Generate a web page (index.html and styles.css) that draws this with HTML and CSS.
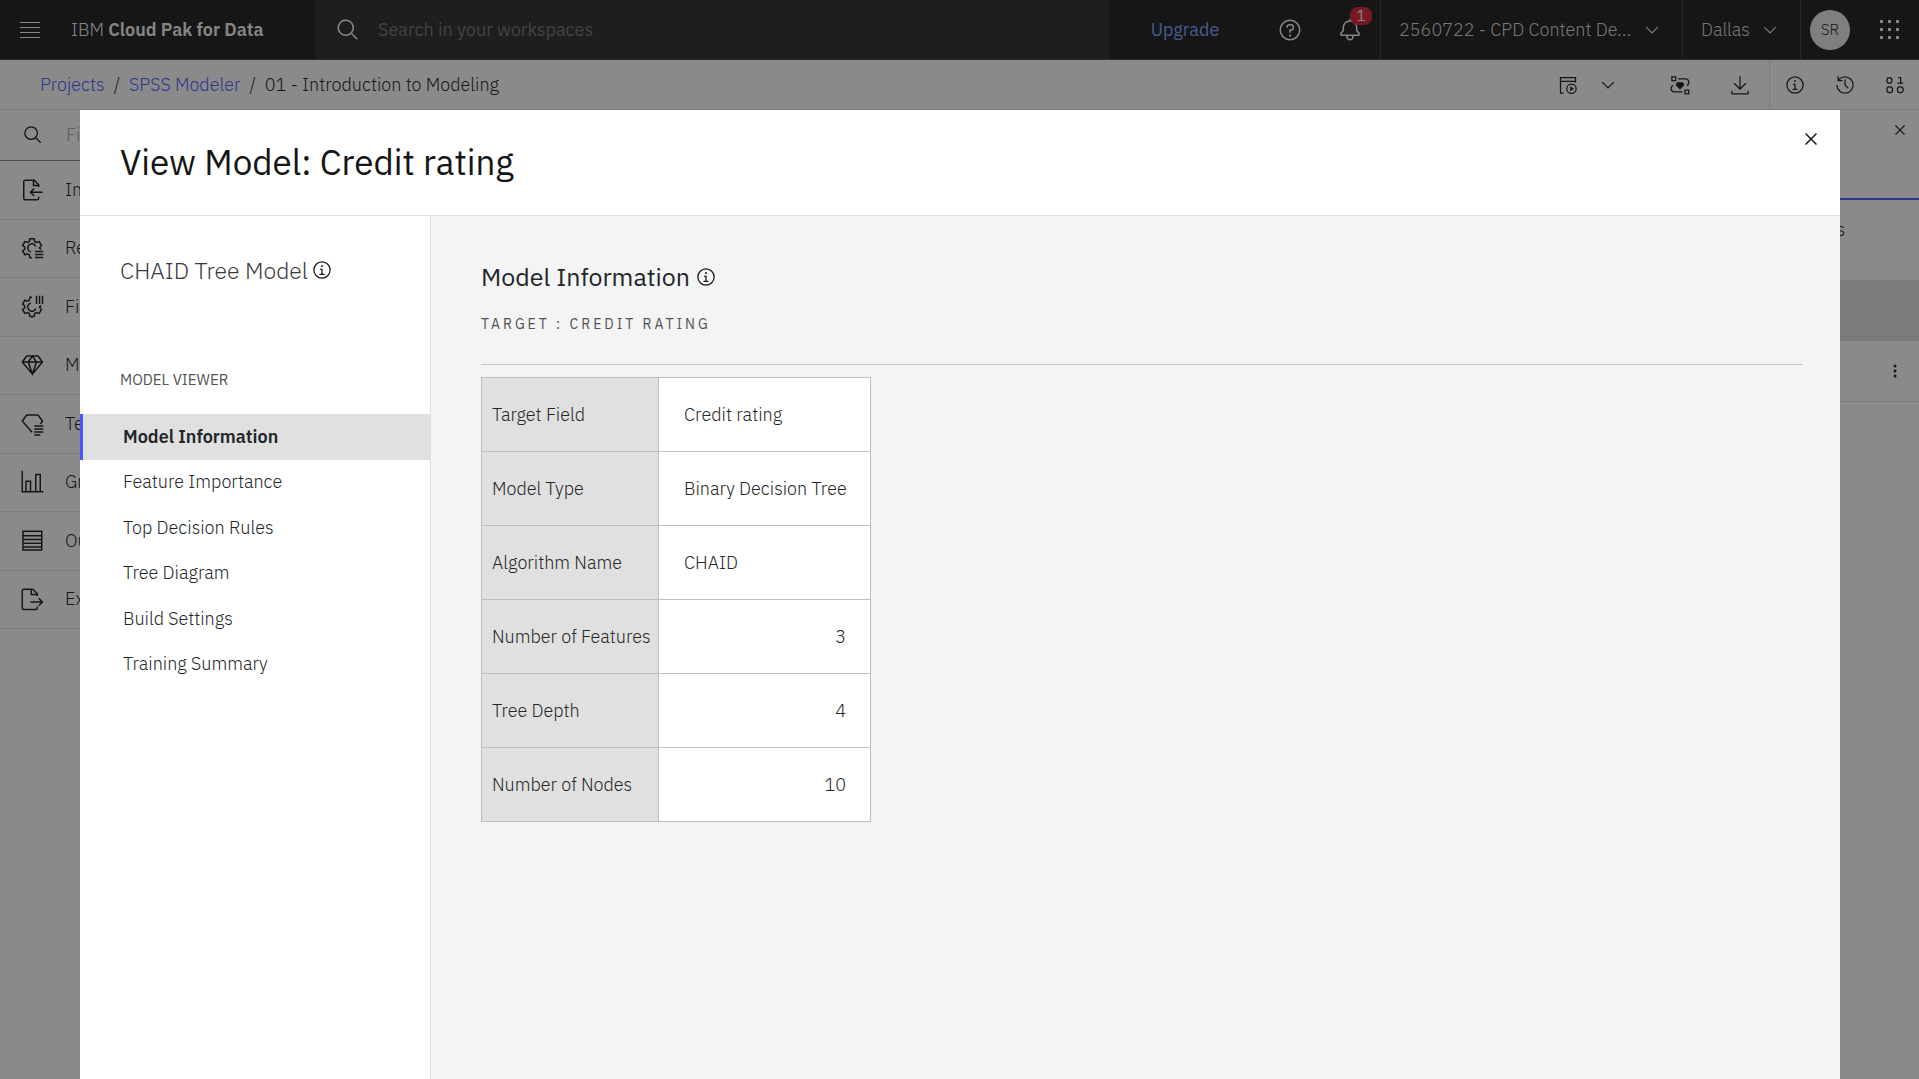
FILE: index.html
```html
<!DOCTYPE html>
<html lang="en">
<head>
<meta charset="utf-8">
<meta name="viewport" content="width=device-width, initial-scale=1">
<title>View Model: Credit rating</title>
<link rel="stylesheet" href="styles.css">
</head>
<body>
<svg class="defs" aria-hidden="true">
  <symbol id="search" viewBox="0 0 32 32"><path d="M29,27.586l-7.552-7.552a11.018,11.018,0,1,0-1.414,1.414L27.586,29ZM4,13a9,9,0,1,1,9,9A9.01,9.01,0,0,1,4,13Z"/></symbol>
  <symbol id="info" viewBox="0 0 32 32"><path d="M17 22V14H13v2h2v6H12v2h8V22zM16 8a1.5 1.5 0 1 0 1.5 1.5A1.5 1.5 0 0 0 16 8z"/><path d="M16,30A14,14,0,1,1,30,16,14,14,0,0,1,16,30ZM16,4A12,12,0,1,0,28,16,12,12,0,0,0,16,4Z"/></symbol>
  <symbol id="close" viewBox="0 0 32 32"><path d="M24 9.4 22.6 8 16 14.6 9.4 8 8 9.4 14.6 16 8 22.6 9.4 24 16 17.4 22.6 24 24 22.6 17.4 16z"/></symbol>
  <symbol id="chevron" viewBox="0 0 32 32"><path d="M16 22 6 12 7.4 10.6 16 19.2 24.6 10.6 26 12z"/></symbol>
  <symbol id="gear" viewBox="0 0 32 32"><path class="line" d="M28 18 26 15.800 28.500 12.500 25.600 7.500 22 8.700 19.500 7.300 18.800 3.500H13.200L12.500 7.300 10 8.700 6.400 7.500 3.500 12.500 6.300 15v2.600L3.500 20l2.900 5 3.600-1.200 2.500 1.400.7 3.800H16M21 14A5.500 5.500 0 1 0 14.500 21.200"/></symbol>
</svg>

<div class="app">
  <header class="topbar">
    <button class="menu" aria-label="Menu"><svg width="20" height="16" viewBox="0 0 20 16"><path d="M0 0h20v1H0zM0 5h20v1H0zM0 10h20v1H0zM0 15h20v1H0z"/></svg></button>
    <div class="brand">IBM <b>Cloud Pak for Data</b></div>
    <label class="global-search"><svg class="i24"><use href="#search"/></svg><input type="search" aria-label="Search" placeholder="Search in your workspaces"></label>
    <a class="upgrade" href="#">Upgrade</a>
    <button class="top-icon" aria-label="Help"><svg class="i24" viewBox="0 0 32 32"><path d="M16,2A14,14,0,1,0,30,16,14,14,0,0,0,16,2Zm0,26A12,12,0,1,1,28,16,12,12,0,0,1,16,28Z"/><circle cx="16" cy="23.500" r="1.500"/><path d="M17,8H15.500A4.490,4.490,0,0,0,11,12.500V13h2v-.5A2.500,2.500,0,0,1,15.500,10H17a2.500,2.500,0,0,1,0,5H15v4.500h2V17a4.500,4.500,0,0,0,0-9Z"/></svg></button>
    <button class="top-icon" aria-label="Notifications"><svg class="i24" viewBox="0 0 32 32"><path d="M28.707,19.293,26,16.586V13a10.014,10.014,0,0,0-9-9.949V1H15V3.051A10.014,10.014,0,0,0,6,13v3.586L3.293,19.293A1,1,0,0,0,3,20v3a1,1,0,0,0,1,1h7v.777a5.152,5.152,0,0,0,4.500,5.199A5.006,5.006,0,0,0,21,25V24h7a1,1,0,0,0,1-1V20A1,1,0,0,0,28.707,19.293ZM19,25a3,3,0,0,1-6,0V24h6Zm8-3H5V20.414L7.707,17.707A1,1,0,0,0,8,17V13a8,8,0,0,1,16,0v4a1,1,0,0,0,.293.707L27,20.414Z"/></svg><span class="badge">1</span></button>
    <button class="switch account"><span>2560722 - CPD Content De...</span><svg class="i20"><use href="#chevron"/></svg></button>
    <button class="switch region"><span>Dallas</span><svg class="i20"><use href="#chevron"/></svg></button>
    <div class="user">
      <button class="avatar">SR</button>
      <button class="apps" aria-label="App switcher"><svg width="20" height="20" viewBox="0 0 20 20"><path d="M1 0h3v3H1zM9 0h3v3H9zM17 0h3v3h-3zM1 8h3v3H1zM9 8h3v3H9zM17 8h3v3h-3zM1 16h3v3H1zM9 16h3v3H9zM17 16h3v3h-3z"/></svg></button>
    </div>
  </header>

  <div class="toolbar">
    <nav class="crumbs" aria-label="Breadcrumb"><a href="#">Projects</a><span>/</span><a href="#">SPSS Modeler</a><span>/</span><span>01 - Introduction to Modeling</span></nav>
    <div class="tools">
      <button class="tool" aria-label="Schedule job"><svg class="i20" viewBox="0 0 32 32"><path class="line" d="M9 29H4V4h24v8M4 10h24"/><circle class="line" cx="21.500" cy="22" r="7.500"/><path d="M19.500 18v8l6-4z"/></svg></button>
      <button class="tool" aria-label="Job options"><svg class="i20"><use href="#chevron"/></svg></button>
      <button class="tool wide" aria-label="Flow"><svg class="i20" viewBox="0 0 32 32"><path class="line" d="M3 3h6v6H3zM24 24h6v6h-6zM13 6h12a5.500 5.500 0 0 1 2 10.500M20 27H7A5.500 5.500 0 0 1 5 16.500"/><path d="M16 23l-6-6a4 4 0 0 1 6-5 4 4 0 0 1 6 5z"/></svg></button>
      <button class="tool" aria-label="Download"><svg class="i20" viewBox="0 0 32 32"><path d="M28 25v4H4V25H2v4a2 2 0 0 0 2 2H28a2 2 0 0 0 2-2V25zM26 14 24.590 12.590 17 20.170V2H15V20.170L7.410 12.590 6 14 16 24z"/></svg></button>
    </div>
    <div class="tools side">
      <button class="tool" aria-label="Information"><svg class="i20"><use href="#info"/></svg></button>
      <button class="tool" aria-label="History"><svg class="i20" viewBox="0 0 32 32"><path d="M20.590 22 15 16.410V7h2v8.580L22 20.590z"/><path d="M16,2A13.940,13.940,0,0,0,6,6.230V2H4v8h8V8H7.080A12,12,0,1,1,4,16H2A14,14,0,1,0,16,2Z"/></svg></button>
      <button class="tool" aria-label="Data"><svg class="i20" viewBox="0 0 32 32"><path class="line" d="M21 4h4v9M20 13h9"/><rect class="line" x="3" y="4" width="8" height="9" rx="4"/><rect class="line" x="3" y="19" width="9" height="9" rx="4"/><rect class="line" x="20" y="19" width="9" height="9" rx="4"/></svg></button>
    </div>
  </div>

  <div class="workspace">
    <aside class="palette">
      <label class="finder"><svg class="i20"><use href="#search"/></svg><input type="search" aria-label="Find palette nodes" placeholder="Find nodes"></label>
      <ul class="groups">
        <li><svg class="i24" viewBox="0 0 32 32"><path class="line" d="M25 12V9l-6-6H7a2 2 0 0 0-2 2v22a2 2 0 0 0 2 2h16a2 2 0 0 0 2-2v-2M18 3v7h7M30 19H14M19 14l-5 5 5 5"/></svg>Import</li>
        <li><svg class="i24" viewBox="0 0 32 32"><use href="#gear"/><path class="line" d="M20 20.500h11M20 24.500h11M20 28.500h11"/></svg>Record</li>
        <li><svg class="i24" viewBox="0 0 32 32"><g transform="matrix(1 0 0 -1 0 32)"><use href="#gear"/></g><path class="line" d="M22 1v11M26 1v11M30 1v11"/></svg>Field</li>
        <li><svg class="i24" viewBox="0 0 32 32"><path class="line" d="M9 4h15l6 8-13.500 16L3 12zM3 12h27M16.500 4l-5.500 8 5.500 16 5.500-16z"/></svg>Models</li>
        <li><svg class="i24" viewBox="0 0 32 32"><path class="line" d="M27 16l3-4-6-8H9l-6 8 13 15M19 18.500h12M19 22.500h12M19 26.500h12M19 30.500h8"/></svg>Text</li>
        <li><svg class="i24" viewBox="0 0 32 32"><path class="line" d="M3 1v28h28M8 29V15h6v14M21 29V6h6v23"/></svg>Graphs</li>
        <li><svg class="i24" viewBox="0 0 32 32"><path class="line" d="M4 3h25v25H4zM4 9h25M4 14h25M4 19h25M4 24h25"/></svg>Outputs</li>
        <li><svg class="i24" viewBox="0 0 32 32"><path class="line" d="M23 12V9l-6-6H5a2 2 0 0 0-2 2v23a2 2 0 0 0 2 2h16a2 2 0 0 0 2-2v-2M15 3v7h8M14 20h16M25 15l5 5-5 5"/></svg>Export</li>
      </ul>
    </aside>
    <aside class="results">
      <div class="results-head"><button class="plain" aria-label="Close panel"><svg class="i20"><use href="#close"/></svg></button></div>
      <div class="results-tab">Models</div>
      <div class="results-band"></div>
      <div class="results-row"><button class="plain" aria-label="Options"><svg width="4" height="14" viewBox="0 0 4 14"><circle cx="2" cy="2" r="1.500"/><circle cx="2" cy="7" r="1.500"/><circle cx="2" cy="12" r="1.500"/></svg></button></div>
    </aside>
  </div>
</div>

<div class="overlay">
  <section class="modal" role="dialog" aria-labelledby="modal-title">
    <header class="modal-head">
      <h1 id="modal-title">View Model: Credit rating</h1>
      <button class="plain" aria-label="Close"><svg class="i24"><use href="#close"/></svg></button>
    </header>
    <div class="modal-body">
      <nav class="side-nav">
        <h2>CHAID Tree Model <svg class="i20"><use href="#info"/></svg></h2>
        <p class="caption">MODEL VIEWER</p>
        <ul>
          <li><a class="current" aria-current="page" href="#">Model Information</a></li>
          <li><a href="#">Feature Importance</a></li>
          <li><a href="#">Top Decision Rules</a></li>
          <li><a href="#">Tree Diagram</a></li>
          <li><a href="#">Build Settings</a></li>
          <li><a href="#">Training Summary</a></li>
        </ul>
      </nav>
      <main class="content">
        <h2>Model Information <svg class="i20"><use href="#info"/></svg></h2>
        <p class="target">TARGET : CREDIT RATING</p>
        <table>
          <tr><th scope="row">Target Field</th><td>Credit rating</td></tr>
          <tr><th scope="row">Model Type</th><td>Binary Decision Tree</td></tr>
          <tr><th scope="row">Algorithm Name</th><td>CHAID</td></tr>
          <tr><th scope="row">Number of Features</th><td class="num">3</td></tr>
          <tr><th scope="row">Tree Depth</th><td class="num">4</td></tr>
          <tr><th scope="row">Number of Nodes</th><td class="num">10</td></tr>
        </table>
      </main>
    </div>
  </section>
</div>
</body>
</html>
```
FILE: styles.css
```css
* { box-sizing: border-box; }

body {
  margin: 0;
  font: 300 18px/24px "IBM Plex Sans", Roboto, "Liberation Sans", sans-serif;
  color: #161616;
  overflow: hidden;
}

button, input {
  font: inherit;
  color: inherit;
  background: none;
  border: 0;
  padding: 0;
  margin: 0;
}

input { outline: 0; min-width: 0; }
a { text-decoration: none; color: #4558ff; }
ul { list-style: none; margin: 0; padding: 0; }
h1, h2, p { margin: 0; font-weight: 400; }

svg { fill: currentColor; display: block; flex: none; }
.defs { width: 0; height: 0; position: absolute; }
.line { fill: none; stroke: currentColor; stroke-width: 2; }
.i20 { width: 20px; height: 20px; }
.i24 { width: 24px; height: 24px; }

.app { min-height: 100vh; background: #fff; display: flex; flex-direction: column; }

/* Top bar */
.topbar {
  display: flex;
  height: 60px;
  background: #161616;
  color: #f4f4f4;
  border-bottom: 1px solid #393939;
}
.menu { width: 60px; display: grid; place-items: center; }
.brand { width: 255px; padding-left: 11px; line-height: 60px; white-space: nowrap; }
.brand b { font-weight: 600; }
.global-search {
  flex: 1;
  display: flex;
  align-items: center;
  gap: 18px;
  padding-left: 21px;
  background: #262626;
}
.global-search input { flex: 1; font-weight: 400; }
.global-search input::placeholder { color: #6f6f6f; opacity: 1; }
.upgrade { width: 150px; text-align: center; line-height: 60px; font-weight: 400; color: #78a0ff; }
.top-icon { width: 60px; display: grid; place-items: center; position: relative; }
.badge {
  position: absolute;
  top: 7px;
  right: 8px;
  width: 22px;
  height: 18px;
  border-radius: 8px;
  background: #da1e28;
  font-size: 15px;
  font-weight: 400;
  line-height: 18px;
}
.switch {
  display: flex;
  align-items: center;
  justify-content: space-between;
  padding: 0 20px 0 18px;
  border-left: 1px solid #393939;
  color: #d8d8d8;
}
.account { width: 302px; }
.region { width: 118px; }
.user { display: flex; align-items: center; width: 119px; padding: 0 20px 0 9px; justify-content: space-between; border-left: 1px solid #393939; }
.avatar { width: 40px; height: 40px; border-radius: 50%; background: #e8e8e8; color: #161616; font-size: 15px; text-align: center; }

/* Breadcrumb bar */
.toolbar { display: flex; justify-content: space-between; height: 50px; border-bottom: 1px solid #e0e0e0; }
.crumbs { flex: 1; display: flex; align-items: center; gap: 9px; padding-left: 40px; }
.tools { display: flex; align-items: center; padding-right: 9px; }
.tool { width: 40px; height: 48px; display: grid; place-items: center; }
.tools .wide { width: 60px; margin: 0 10px 0 22px; }
.side { border-left: 1px solid #e0e0e0; padding: 0 14px 0 15px; gap: 30px; }
.side .tool { width: 20px; }

/* Panels below the bars */
.workspace { flex: 1; display: flex; justify-content: space-between; }
.palette { width: 260px; }
.finder { display: flex; align-items: center; gap: 23px; height: 51px; padding-left: 23px; border-bottom: 1px solid #8d8d8d; }
.finder input::placeholder { color: #a8a8a8; opacity: 1; }
.groups { display: grid; grid-template-rows: repeat(8, 1fr); height: 468px; }
.groups li { display: flex; align-items: center; gap: 21px; padding-left: 20px; border-bottom: 1px solid #e0e0e0; }
.results { width: 240px; }
.results-head { display: flex; justify-content: flex-end; height: 90px; padding: 10px 9px 0 0; border-bottom: 2px solid #4558ff; align-items: flex-start; }
.results-tab { height: 80px; padding: 18px 74px 0 0; text-align: right; }
.results-band { height: 61px; background: #e0e0e0; }
.results-row { display: flex; align-items: center; justify-content: flex-end; height: 61px; padding-right: 22px; border-bottom: 1px solid #e0e0e0; }

/* Dialog */
.overlay {
  position: fixed;
  inset: 0;
  padding: 110px 79px 0 80px;
  background: rgba(22, 22, 22, 0.5);
  display: flex;
}
.modal { flex: 1; display: flex; flex-direction: column; background: #fff; }
.modal-head {
  display: flex;
  justify-content: space-between;
  align-items: flex-start;
  padding: 17px 17px 33px 40px;
  border-bottom: 1px solid #e0e0e0;
}
.modal-head h1 { font-size: 35px; line-height: 40px; padding-top: 15px; }
.modal-body { flex: 1; display: flex; }

.side-nav { width: 351px; border-right: 1px solid #e0e0e0; padding-top: 39px; }
h2 { display: flex; align-items: center; gap: 6px; font-size: 25px; line-height: 30px; }
.side-nav h2 { gap: 4px; padding-left: 40px; font-size: 23px; font-weight: 300; color: #393939; }
.side-nav h2 svg { color: #161616; }
.caption { padding: 85px 0 24px 40px; font-size: 15px; line-height: 20px; color: #525252; }
.side-nav ul { display: grid; grid-template-rows: repeat(6, 1fr); height: 273px; }
.side-nav li { display: grid; }
.side-nav a { display: flex; align-items: center; padding-left: 40px; color: #21272a; border-left: 3px solid transparent; }
.side-nav .current { font-weight: 600; background: #e0e0e0; border-left-color: #4558ff; }

.content { flex: 1; padding: 46px 37px 40px 50px; background: #f4f4f4; color: #262626; }
.content h2 { color: #21272a; }
.content svg { color: #161616; }
.target {
  padding: 22px 0 30px;
  margin-bottom: 12px;
  border-bottom: 1px solid #c6c6c6;
  font-size: 14px;
  line-height: 20px;
  letter-spacing: 3px;
  color: #525252;
}
table { width: 390px; table-layout: fixed; border-collapse: collapse; }
th, td { height: 74px; border: 1px solid #bebebe; text-align: left; font-weight: 300; white-space: nowrap; }
th { width: 177px; padding: 0 8px 0 10px; background: #e0e0e0; }
td { padding: 0 24px 0 25px; background: #fff; }
.num { text-align: right; }
```
